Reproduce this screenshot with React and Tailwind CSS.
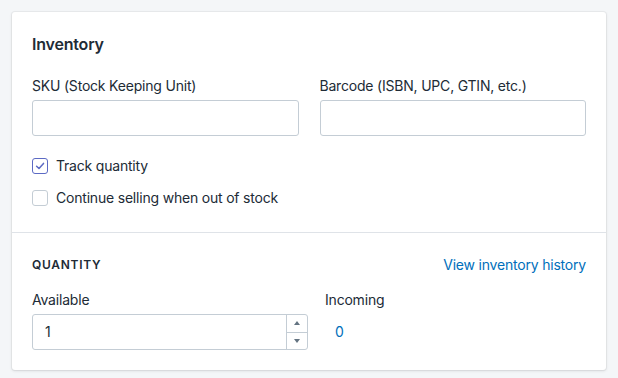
import React from "react";

const Checkbox = ({ checked, label }) => (
  <label className="flex h-5 items-center gap-2">
    <span
      className={`flex h-4 w-4 items-center justify-center rounded-[3px] border bg-white ${
        checked ? "border-[#5c6ac4]" : "border-[#c4cdd5]"
      }`}
    >
      {checked && (
        <svg width="10" height="10" viewBox="0 0 10 10" fill="none">
          <path d="M1.6 5.2 L4 7.5 L8.5 2.4" stroke="#5c6ac4" strokeWidth="1.5" strokeLinecap="round" strokeLinejoin="round" />
        </svg>
      )}
    </span>
    <span>{label}</span>
  </label>
);

const Field = ({ label }) => (
  <div>
    <div className="mb-1 h-5 leading-5">{label}</div>
    <div className="h-9 rounded-[3px] border border-[#c4cdd5] bg-white" />
  </div>
);

export default function App() {
  return (
    <div
      className="min-h-screen bg-[#f4f6f8] p-3 text-[14px] leading-5 tracking-[-0.2px] text-[#212b36]"
      style={{ fontFamily: "Inter, 'Noto Sans', sans-serif" }}
    >
      <div className="w-[594px] rounded-[3px] bg-white shadow-[0_0_0_1px_rgba(63,63,68,0.05),0_1px_3px_0_rgba(63,63,68,0.15)]">
        <div className="px-5 pt-5 pb-6">
          <h2 className="h-6 text-[16px] font-semibold leading-6">Inventory</h2>
          <div className="mt-5 grid grid-cols-2 gap-[21px]">
            <Field label="SKU (Stock Keeping Unit)" />
            <Field label="Barcode (ISBN, UPC, GTIN, etc.)" />
          </div>
          <div className="mt-5 flex flex-col gap-3">
            <Checkbox checked label="Track quantity" />
            <Checkbox label="Continue selling when out of stock" />
          </div>
        </div>
        <div className="border-t border-[#dfe3e8] px-5 pt-[22px] pb-5">
          <div className="flex h-5 items-center justify-between">
            <span className="text-[12px] font-semibold tracking-[0.06em]">QUANTITY</span>
            <span className="text-[#006fbb]">View inventory history</span>
          </div>
          <div className="mt-[15px] flex gap-[17px]">
            <div className="w-[276px]">
              <div className="mb-1 h-5">Available</div>
              <div className="flex h-9 rounded-[3px] border border-[#c4cdd5] bg-white">
                <div className="flex flex-1 items-center pl-3">1</div>
                <div className="flex w-[21px] flex-col border-l border-[#c4cdd5]">
                  <div className="flex flex-1 items-center justify-center border-b border-[#c4cdd5]">
                    <svg width="6" height="4" viewBox="0 0 6 4"><path d="M0 4 L3 0 L6 4 Z" fill="#637381" /></svg>
                  </div>
                  <div className="flex flex-1 items-center justify-center">
                    <svg width="6" height="4" viewBox="0 0 6 4"><path d="M0 0 L3 4 L6 0 Z" fill="#637381" /></svg>
                  </div>
                </div>
              </div>
            </div>
            <div>
              <div className="mb-1 h-5">Incoming</div>
              <div className="flex h-9 items-center pl-[10px] text-[#006fbb]">0</div>
            </div>
          </div>
        </div>
      </div>
    </div>
  );
}
